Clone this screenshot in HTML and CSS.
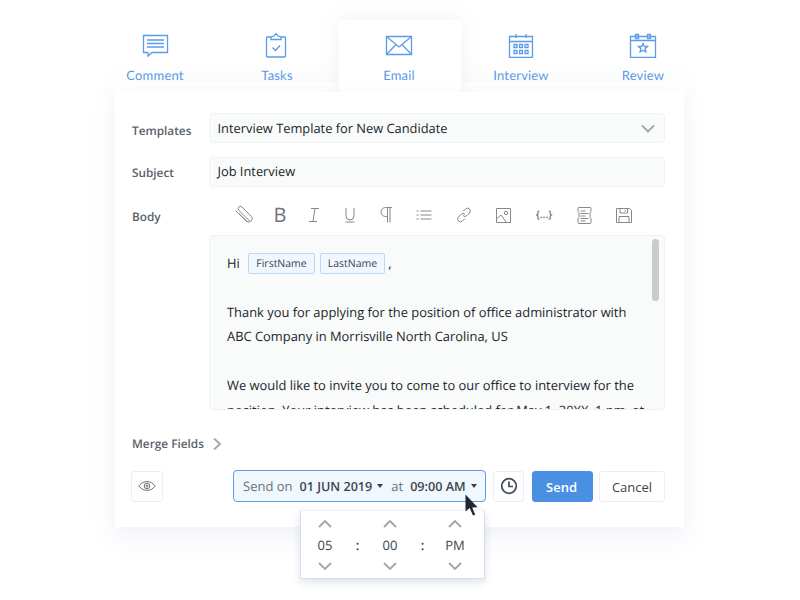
FILE: index.html
```html
<!DOCTYPE html>
<html lang="en">
<head>
<meta charset="utf-8">
<title>Email</title>
<link rel="stylesheet" href="styles.css">
</head>
<body>
<main class="page">
  <nav class="tabs">
    <div class="tab">
      <svg class="tab-icon" width="28" height="26" viewBox="0 0 28 26"><path d="M2.500 3.500h24v17H11l-4 3.500v-3.500H2.500z"/><path d="M6 8h17M6 11.500h17M6 15h17"/></svg>
      <span>Comment</span>
    </div>
    <div class="tab">
      <svg class="tab-icon" width="28" height="26" viewBox="0 0 28 26"><path d="M8 5H4.500a1 1 0 0 0-1 1v18a1 1 0 0 0 1 1h17a1 1 0 0 0 1-1V6a1 1 0 0 0-1-1H18"/><path d="M8 7.500V5l3-1 2-2.500L15 4l3 1v2.500z"/><path d="M9.500 15.500l3 3 4.500-5"/></svg>
      <span>Tasks</span>
    </div>
    <div class="tab active">
      <svg class="tab-icon" width="28" height="26" viewBox="0 0 28 26"><path d="M1.500 4.500h25v18h-25z"/><path d="M1.500 4.500L14 15 26.500 4.500M1.500 22.500l9.500-10M26.500 22.500l-9.500-10"/></svg>
      <span>Email</span>
    </div>
    <div class="tab">
      <svg class="tab-icon" width="28" height="26" viewBox="0 0 28 26"><path d="M2.500 4.500h23v21h-23zM2.500 9.500h23M9 2v4M19 2v4"/><path d="M7 12.500h3v3H7zM12.500 12.500h3v3h-3zM18 12.500h3v3h-3zM7 18.500h3v3H7zM12.500 18.500h3v3h-3zM18 18.500h3v3h-3z"/></svg>
      <span>Interview</span>
    </div>
    <div class="tab">
      <svg class="tab-icon" width="28" height="26" viewBox="0 0 28 26"><path d="M1.500 4.500h25v21h-25zM1.500 8.500h25"/><path d="M6.500 2.500h3v4h-3zM18.500 2.500h3v4h-3z"/><path d="M14 11.500l1.400 3h3.100l-2.400 2.200.8 3.300-2.900-1.700-2.900 1.700.8-3.300-2.400-2.200h3.100z"/></svg>
      <span>Review</span>
    </div>
  </nav>

  <section class="card">
    <div class="row first">
      <label class="label">Templates</label>
      <div class="field select">
        <span>Interview Template for New Candidate</span>
        <svg width="14" height="9" viewBox="0 0 14 9" class="chev"><path d="M1 1.500l6 6 6-6"/></svg>
      </div>
    </div>
    <div class="row second">
      <label class="label">Subject</label>
      <div class="field">Job Interview</div>
    </div>
    <div class="row body-row">
      <label class="label">Body</label>
      <div class="toolbar">
        <div class="tb-group">
          <svg width="20" height="20" viewBox="0 0 20 20"><path d="M16.500 16L5.500 5a2.300 2.300 0 0 1 3.200-3.200l9.500 9.500a3.300 3.300 0 0 1-4.700 4.700L2.500 5.700M5.500 8l8 8.500"/></svg>
          <span class="tb-b">B</span>
          <svg width="14" height="20" viewBox="0 0 14 20"><path d="M4 3.500h8M2 16.500h8M8 3.500L6 16.500"/></svg>
          <svg width="14" height="20" viewBox="0 0 14 20"><path d="M3 3v8a4 4 0 0 0 8 0V3M2.500 17h9"/></svg>
          <svg width="14" height="20" viewBox="0 0 14 20"><path d="M13 2.500H6.500a4.500 4.500 0 0 0 0 9H8.500M8.500 2.500v15M11 2.500v15"/></svg>
        </div>
        <div class="tb-group wide">
          <svg width="16" height="20" viewBox="0 0 16 20"><path d="M4.500 6h11M4.500 10h11M4.500 14h11M.5 6h2M.5 10h2M.5 14h2"/></svg>
          <svg width="16" height="20" viewBox="0 0 16 20"><path d="M7 6.500l2.500-2.500a2.700 2.700 0 0 1 4 4L11 10.500a2.700 2.700 0 0 1-4 0M9 13.500L6.500 16a2.700 2.700 0 0 1-4-4L5 9.500a2.700 2.700 0 0 1 4 0"/></svg>
          <svg width="15" height="20" viewBox="0 0 15 20"><path d="M.5 3.500h14v14H.5zM.5 14l4.500-4 5.500 7.500"/><circle cx="10" cy="8" r="1.700"/></svg>
          <span class="tb-code">{...}</span>
          <svg width="15" height="20" viewBox="0 0 15 20"><path d="M1 3.500a1 1 0 0 1 1-1h11a1 1 0 0 1 1 1v3l-1 1v5l1 1v4a1 1 0 0 1-1 1H2a1 1 0 0 1-1-1v-4l1-1v-5l-1-1z"/><path d="M3.500 6h5M3.500 8.500h8M3.500 11h5M3.500 13.500h8M3.500 16h5"/></svg>
          <svg width="16" height="20" viewBox="0 0 16 20"><path d="M.5 3.500h13l2 2v12H.5zM4 3.500v4.500h7.500V3.500M9 5v1.500M3 17.500v-6h10v6"/></svg>
        </div>
      </div>
    </div>
    <div class="editor">
      <div class="editor-text">
        <p class="greet">Hi <span class="tag">FirstName</span><span class="tag">LastName</span><span class="comma">,</span></p>
        <p>&nbsp;</p>
        <p>Thank you for applying for the position of office administrator with<br>ABC Company in Morrisville North Carolina, US</p>
        <p>&nbsp;</p>
        <p>We would like to invite you to come to our office to interview for the<br>position. Your interview has been scheduled for May 1, 20XX, 1 pm, at</p>
      </div>
      <div class="scrollbar"></div>
    </div>
    <div class="merge">
      <span class="label">Merge Fields</span>
      <svg width="10" height="14" viewBox="0 0 10 14" class="chev"><path d="M2 1.500l6 5.500-6 5.500"/></svg>
    </div>
    <div class="actions">
      <button class="btn eye" aria-label="Preview">
        <svg width="18" height="10" viewBox="0 0 18 10"><path d="M.8 5C3 2 6 .6 9 .6S15 2 17.200 5C15 8 12 9.400 9 9.400S3 8 .8 5z"/><circle cx="9" cy="5" r="2.800"/><circle cx="9" cy="5" r="1"/></svg>
      </button>
      <div class="send-on">
        <span class="muted">Send on</span>
        <b class="when">01 JUN 2019</b><i class="caret"></i>
        <span class="muted at">at</span>
        <b class="when">09:00 AM</b><i class="caret"></i>
      </div>
      <button class="btn clock" aria-label="Schedule">
        <svg width="18" height="18" viewBox="0 0 18 18"><circle cx="9" cy="9" r="7.300"/><path d="M9 4.500V9.500H13"/></svg>
      </button>
      <button class="btn primary">Send</button>
      <button class="btn cancel">Cancel</button>
    </div>
  </section>

  <div class="picker">
    <div class="spin">
      <svg class="chev" width="14" height="8" viewBox="0 0 14 8"><path d="M1 7l6-6 6 6"/></svg>
      <span>05</span>
      <svg class="chev" width="14" height="8" viewBox="0 0 14 8"><path d="M1 1l6 6 6-6"/></svg>
    </div>
    <span class="sep">:</span>
    <div class="spin">
      <svg class="chev" width="14" height="8" viewBox="0 0 14 8"><path d="M1 7l6-6 6 6"/></svg>
      <span>00</span>
      <svg class="chev" width="14" height="8" viewBox="0 0 14 8"><path d="M1 1l6 6 6-6"/></svg>
    </div>
    <span class="sep">:</span>
    <div class="spin">
      <svg class="chev" width="14" height="8" viewBox="0 0 14 8"><path d="M1 7l6-6 6 6"/></svg>
      <span>PM</span>
      <svg class="chev" width="14" height="8" viewBox="0 0 14 8"><path d="M1 1l6 6 6-6"/></svg>
    </div>
  </div>

  <svg class="cursor" width="16" height="26" viewBox="0 0 16 26"><path d="M1.500 1.500v17l4.200-3.600 3.300 7.600 2.200-.8-3-7.200 5.300-.2z" fill="#1f2733"/></svg>
</main>
</body>
</html>
```
FILE: styles.css
```css
* { box-sizing: border-box; }
html, body { margin: 0; padding: 0; background: #fff; }
body { font-family: "Open Sans", "Liberation Sans", sans-serif; color: #20252c; text-rendering: geometricPrecision; }
.page { position: relative; width: 800px; height: 600px; padding: 20px 115.500px 0 115.500px; overflow: hidden; }

.tabs { display: flex; height: 72px; margin: 0 -20px 0 -21px; position: relative; }
.tab { flex: 1; display: flex; flex-direction: column; align-items: center; color: #5b9be8; font-family: Lato, "Open Sans", sans-serif; font-size: 13px; letter-spacing: .2px; padding: 12px 1px 0 0; }
.tab span { margin-top: 9px; line-height: 16px; }
.tab.active { background: #fff; position: relative; z-index: 2; box-shadow: 0 0 22px rgba(90, 110, 170, .09); }
.tab-icon { fill: none; stroke: #5b9be8; stroke-width: 1.300; display: block; }

.card { position: relative; z-index: 3; background: #fff; height: 435px; margin-left: -.5px; margin-right: .5px; padding: 21px 19px 0 17px; box-shadow: 0 8px 24px rgba(90, 110, 170, .1); }
.tabs::before { content: ""; position: absolute; left: 20px; right: 20px; top: 62px; bottom: 0; box-shadow: 0 0 24px rgba(90, 110, 170, .07); }

.row { display: flex; align-items: center; margin-bottom: 14px; }
.label { width: 77px; flex: none; padding-top: 4px; font-size: 11.800px; font-weight: 600; color: #5c6269; }
.first .label { padding-top: 5px; }
.second .label { padding-top: 2px; }
.field { flex: 1; height: 30px; padding: 0 7.500px; font-size: 12.850px; line-height: 26px; background: #f9fafa; border: 1px solid #f1f3f4; border-radius: 4px; color: #20252c; }
.first .field { line-height: 28px; }
.select { display: flex; justify-content: space-between; align-items: center; padding-right: 9px; }
.chev { fill: none; stroke: #a2a5a8; stroke-width: 1.800; display: block; }

.second { margin-bottom: 0; }
.body-row { height: 20px; margin: 18px 0 10px; }
.toolbar { flex: 1; display: flex; align-items: center; gap: 23px; padding-left: 24px; color: #8d9094; }
.tb-group { display: flex; align-items: center; gap: 22px; }
.tb-group.wide { gap: 24px; }
.toolbar svg { fill: none; stroke: #85888d; stroke-width: 1; display: block; }
.tb-b { width: 10px; font-size: 20px; font-weight: 400; line-height: 20px; color: #70747a; display: flex; justify-content: center; }
.tb-code { width: 18px; font-size: 10.500px; font-weight: 600; color: #70747a; line-height: 20px; display: flex; justify-content: center; white-space: nowrap; }

.editor { position: relative; margin-left: 77px; height: 175px; overflow: hidden; background: #f9fafa; border: 1px solid #eff1f2; border-radius: 4px; padding: 15px 17px 0; }
.editor-text { font-size: 12.900px; line-height: 24.600px; color: #20252c; }
.editor-text p { margin: 0; white-space: nowrap; }
.greet { display: flex; align-items: center; height: 24px; }
.tag { display: inline-block; height: 21px; line-height: 20px; padding: 0 7px; margin-left: 5px; font-size: 10.500px; background: #f1f7fe; border: 1px solid #bcd7f7; border-radius: 2px; color: #3d434a; }
.greet .tag:first-of-type { margin-left: 8.500px; }
.comma { margin-left: 3px; }
.scrollbar { position: absolute; top: 3px; right: 5px; width: 7px; height: 62px; background: #c9cbcd; border-radius: 4px; }

.merge { display: flex; align-items: center; margin-top: 25px; height: 18px; }
.merge .label { width: auto; padding-top: 0; margin-right: 8px; }

.actions { display: flex; align-items: center; margin-top: 17px; height: 32px; }
.btn { height: 31px; padding: 0; font-family: inherit; background: #fff; border: 1px solid #eceef4; border-radius: 3px; display: flex; align-items: center; justify-content: center; }
.btn svg { fill: none; display: block; }
.eye { width: 32px; margin: 0 70px 0 -1px; }
.eye svg { stroke: #6b7076; stroke-width: 1; }
.send-on { width: 253px; height: 32px; display: flex; align-items: center; padding: 0 9px; font-size: 12.600px; white-space: nowrap; background: #f1f7fe; border: 1px solid #5b9be8; border-radius: 4px; }
.muted { color: #6c7278; margin-right: 7px; font-size: 13px; }
.at { margin-left: 8px; margin-right: 7px; }
.when { font-weight: 600; color: #3e444b; }
.caret { width: 0; height: 0; margin-left: 5px; border: 3px solid transparent; border-top: 4px solid #3e444b; border-bottom: 0; }
.clock { width: 31px; margin-left: 7px; }
.clock svg { stroke: #424a57; stroke-width: 1.700; }
.primary { width: 61px; margin-left: 8px; background: #4a90e2; border-color: #4a90e2; color: #fff; font-size: 13px; font-weight: 600; padding: 2px 2px 0 0; }
.cancel { width: 66px; margin-left: 6px; color: #3e444b; font-size: 13px; font-weight: 500; padding-top: 2px; }

.picker { position: absolute; z-index: 5; left: 300px; top: 510px; width: 185px; height: 69px; display: flex; justify-content: space-between; align-items: center; padding: 0 22px 0 17px; background: #fff; border: 1px solid #d5dff0; border-top-color: #eef1f7; box-shadow: 0 3px 8px rgba(70, 90, 150, .18); }
.spin { width: 14px; display: flex; flex-direction: column; align-items: center; gap: 7px; font-size: 13px; line-height: 20px; color: #3e444b; }
.spin span { white-space: nowrap; }
.sep { font-size: 13px; font-weight: 600; color: #3e444b; }
.cursor { position: absolute; z-index: 6; left: 464px; top: 493px; display: block; }
```
